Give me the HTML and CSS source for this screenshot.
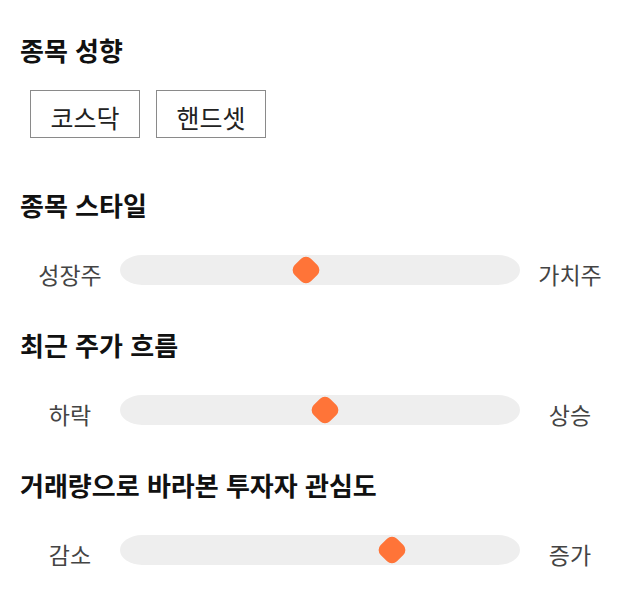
FILE: index.html
```html
<!DOCTYPE html>
<html lang="ko">
<head>
<meta charset="utf-8">
<link rel="stylesheet" href="styles.css">
</head>
<body>
<div class="page">
  <section class="group">
    <h2 class="title">종목 성향</h2>
    <div class="chips">
      <div class="chip">코스닥</div>
      <div class="chip">핸드셋</div>
    </div>
  </section>

  <section class="group slider-group">
    <h2 class="title">종목 스타일</h2>
    <div class="row">
      <span class="label">성장주</span>
      <div class="track"><span class="thumb" style="left:46.5%"></span></div>
      <span class="label">가치주</span>
    </div>
  </section>

  <section class="group slider-group">
    <h2 class="title">최근 주가 흐름</h2>
    <div class="row">
      <span class="label">하락</span>
      <div class="track"><span class="thumb" style="left:51.25%"></span></div>
      <span class="label">상승</span>
    </div>
  </section>

  <section class="group slider-group">
    <h2 class="title">거래량으로 바라본 투자자 관심도</h2>
    <div class="row">
      <span class="label">감소</span>
      <div class="track"><span class="thumb" style="left:68%"></span></div>
      <span class="label">증가</span>
    </div>
  </section>
</div>
</body>
</html>
```

FILE: styles.css
```css
* { box-sizing: border-box; }
html, body { margin: 0; padding: 0; background: #fff; }
body {
  font-family: "Noto Sans CJK KR", "Noto Sans", sans-serif;
  color: #222;
}
.page {
  padding: 35px 20px 0 20px;
}
.title {
  margin: 0;
  font-size: 26px;
  line-height: 30px;
  font-weight: 700;
  color: #111;
}
.chips {
  display: flex;
  gap: 16px;
  margin: 25px 0 0 10px;
}
.chip {
  width: 110px;
  height: 48px;
  border: 1px solid #8a8a8a;
  display: flex;
  align-items: center;
  justify-content: center;
  font-size: 25px;
  color: #222;
  padding-top: 6px;
}
.group:first-child { margin-bottom: 52px; }
.slider-group { margin-bottom: 49px; }
.row {
  display: grid;
  grid-template-columns: 100px 400px 100px;
  align-items: center;
  margin-top: 31px;
  height: 30px;
}
.label {
  text-align: center;
  font-size: 23px;
  line-height: 30px;
  color: #444;
  margin-top: 8px;
}
.track {
  position: relative;
  height: 30px;
  background: #eeeeee;
  border-radius: 22px / 15px;
}
.thumb {
  position: absolute;
  top: 50%;
  width: 23px;
  height: 23px;
  background: #ff7438;
  border-radius: 7px;
  transform: translate(-50%, -50%) rotate(45deg);
}
```
